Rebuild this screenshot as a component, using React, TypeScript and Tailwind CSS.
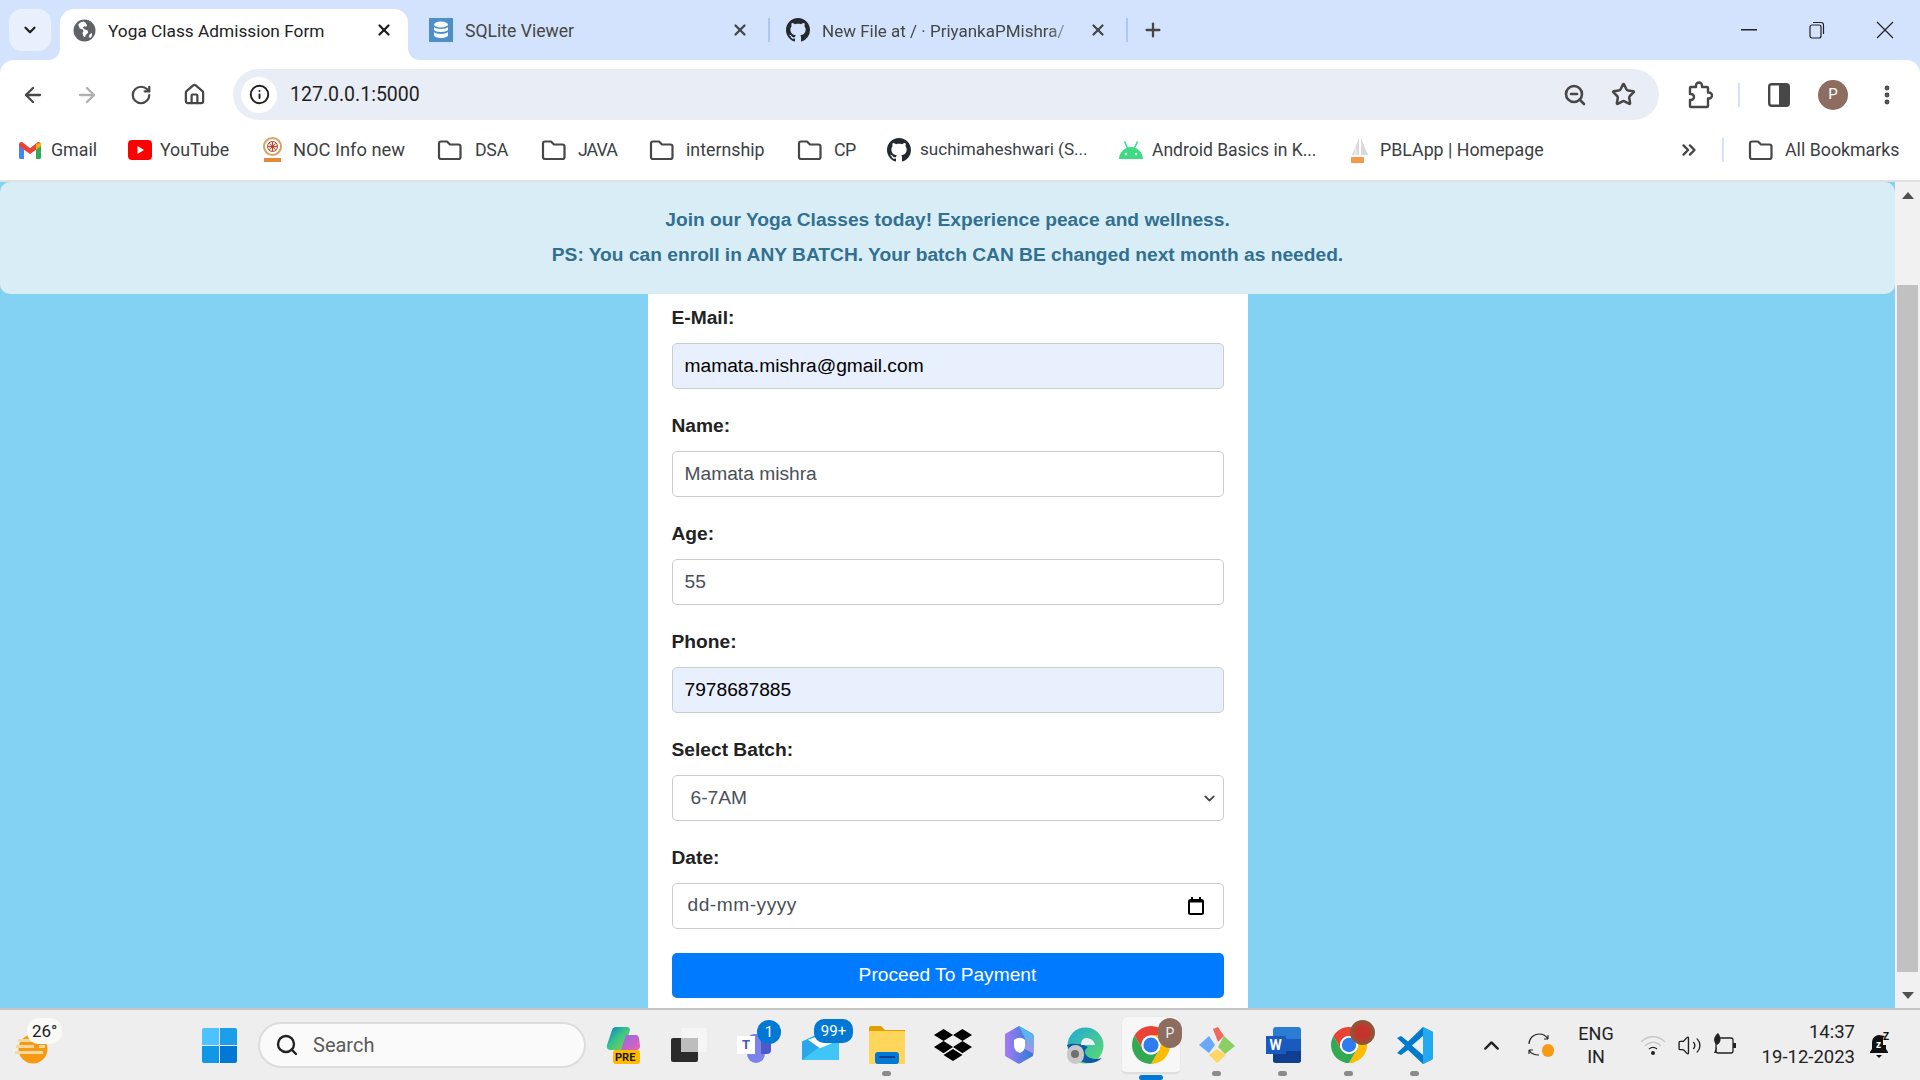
import React from "react";
import { BsGithub } from "react-icons/bs";
import { FaDropbox } from "react-icons/fa";
import { ArrowLeft, ArrowRight, RotateCw, Home, Info, ZoomOut, Star, MoreVertical, X, Plus, ChevronDown, ChevronUp, ChevronsRight, Search, Volume2 } from "lucide-react";

const ui = "font-['Roboto','Noto_Sans',sans-serif]";

function ChromeLogo({ size = 38 }: { size?: number }) {
  return (
    <svg width={size} height={size} viewBox="4 4 40 40">
      <path fill="#ea4335" d="M6.68 14A20 20 0 0 1 41.32 14H24A10 10 0 0 0 15.34 29Z" />
      <path fill="#fbbc04" d="M41.32 14A20 20 0 0 1 24 44L32.66 29A10 10 0 0 0 24 14Z" />
      <path fill="#34a853" d="M24 44A20 20 0 0 1 6.68 14L15.34 29A10 10 0 0 0 32.66 29Z" />
      <circle cx="24" cy="24" r="10" fill="#fff" />
      <circle cx="24" cy="24" r="8" fill="#2f7cf0" />
    </svg>
  );
}

function Globe() {
  return (
    <svg width="23" height="23" viewBox="0 0 22 22" className="shrink-0">
      <circle cx="11" cy="11" r="10.500" fill="#5f6368" />
      <path fill="#fff" d="M10 2.500c-2 .3-4 1.400-5 3l1.500 3.500 3 1 .5 2-1 1.500 1 3 1.500 1 .5-2 2.500-2.500-.5-2-3.500-1.500-1-1.500 1.500-1 1.500.5 1-1.500-1.500-2.500zM18 13.500l-2 1-1 3 2 .5c1-1.200 1.500-2.800 1-4.500z" />
    </svg>
  );
}

function Folder() {
  return (
    <svg width="25" height="22" viewBox="0 0 25 22" fill="none" className="shrink-0">
      <path d="M2 4.500c0-1 .7-2 2-2h6l3 3h8.500c1.200 0 2 .8 2 2v10.500c0 1.200-.8 2-2 2H4c-1.300 0-2-.8-2-2z" stroke="#474747" strokeWidth="2.200" strokeLinejoin="round" />
    </svg>
  );
}

function Gmail() {
  return (
    <svg width="22" height="17" viewBox="0 0 22 17" className="shrink-0">
      <path fill="#4285f4" d="M0 2v13.500C0 16.300.7 17 1.500 17H5V7.500L0 3z" />
      <path fill="#34a853" d="M22 2v13.500c0 .8-.7 1.500-1.500 1.500H17V7.500l5-4.500z" />
      <path fill="#ea4335" d="M0 2.500C0 .5 2.200-.6 3.800.6L11 6.200 18.200.6C19.800-.6 22 .5 22 2.500V4l-5 3.800L11 12 5 7.800 0 4z" />
      <path fill="#fbbc04" d="M17 1.800 22 .9V4l-5 3.800z" opacity="0.9" />
    </svg>
  );
}

function YouTube() {
  return (
    <svg width="24" height="20" viewBox="0 0 24 20" className="shrink-0">
      <rect width="24" height="20" y="0" rx="4" fill="#f00" />
      <path fill="#fff" d="M9.500 6l6.500 4-6.500 4z" />
    </svg>
  );
}

function Nptel() {
  return (
    <svg width="21" height="26" viewBox="0 0 21 26" className="shrink-0">
      <circle cx="10.500" cy="9.500" r="8.500" fill="none" stroke="#d9a066" strokeWidth="2" />
      <circle cx="10.500" cy="9.500" r="5" fill="#f6e6dc" stroke="#b5482c" strokeWidth="1" />
      <path stroke="#b5482c" strokeWidth="1" d="M10.500 5v9M6 9.500h9M7.500 6.500l6 6M13.500 6.500l-6 6" />
      <rect x="2" y="21" width="17" height="4" fill="#e08a3c" />
    </svg>
  );
}

function Android() {
  return (
    <svg width="24" height="20" viewBox="0 0 24 20" className="shrink-0">
      <path fill="#3ddc84" d="M0 19c0-6 5.300-12 12-12s12 6 12 12z" />
      <path stroke="#3ddc84" strokeWidth="1.600" d="M5.500 1.500 8.500 8M18.500 1.500 15.500 8" />
      <circle cx="7" cy="14" r="1.200" fill="#fff" />
      <circle cx="17" cy="14" r="1.200" fill="#fff" />
    </svg>
  );
}

function Pbl() {
  return (
    <svg width="20" height="27" viewBox="0 0 20 27" className="shrink-0">
      <path fill="#d9d9d9" d="M9 1 2 18h7zM11 1l7 17h-7z" />
      <path fill="#ececec" d="M6 6 4 18h3z" />
      <rect x="1" y="20" width="13" height="6" fill="#f59a4b" />
    </svg>
  );
}

function Bookmark({ icon, label, className = "", labelClass = "" }: { icon: React.ReactNode; label: string; className?: string; labelClass?: string }) {
  return (
    <div className={`flex shrink-0 items-center whitespace-nowrap text-[#3c4043] ${className}`}>
      {icon}
      <span className={labelClass}>{label}</span>
    </div>
  );
}

function Field({ label, first, children }: { label: string; first?: boolean; children: React.ReactNode }) {
  return (
    <div className={first ? "" : "mt-[26px]"}>
      <div className="mb-[14px] text-[19.200px] leading-[22px] font-bold text-[#222]">{label}</div>
      {children}
    </div>
  );
}

const inputBox = "block w-full h-[46px] rounded-[5px] border border-[#ccc] px-[12px] text-[19.200px] outline-none font-['Liberation_Sans',sans-serif]";

function TaskSlot({ children, dot, active }: { children: React.ReactNode; dot?: boolean; active?: boolean }) {
  return (
    <div className="relative flex h-[58px] w-[66px] shrink-0 items-center justify-center">
      {active && <div className="absolute left-[4px] top-[1px] h-[57px] w-[58px] rounded-[5px] border-b-2 border-[#dedede] bg-[#f7f7f7] shadow-[0_0_1px_#ccc]" />}
      <div className="relative flex items-center justify-center">{children}</div>
      {dot && <div className="absolute bottom-[-2px] left-[28px] h-[5px] w-[9px] rounded-full bg-[#8a8a8a]" />}
      {active && <div className="absolute bottom-[-6px] left-[21px] h-[5px] w-[24px] rounded-full bg-[#0078d4]" />}
    </div>
  );
}

export default function App() {
  return (
    <div className={`flex h-screen w-[1920px] flex-col overflow-hidden bg-[#d3e3fd] ${ui}`}>
      {/* tab strip */}
      <div className="flex h-[60px] shrink-0 items-center">
        <div className="ml-[9px] flex h-[42px] w-[42px] shrink-0 items-center justify-center rounded-[13px] bg-[#e8f0fe]">
          <ChevronDown size={18} strokeWidth={3} color="#1f1f1f" />
        </div>
        <div className="relative ml-[9px] flex h-[51px] w-[348px] shrink-0 items-center self-end rounded-t-[14px] bg-white pb-[9px] pl-[13px]">
          <svg className="absolute bottom-0 left-[-12px]" width="12" height="12" viewBox="0 0 12 12"><path fill="#fff" d="M12 0v12H0c7 0 12-5 12-12z" /></svg>
          <svg className="absolute bottom-0 right-[-12px]" width="12" height="12" viewBox="0 0 12 12"><path fill="#fff" d="M0 0v12h12C5 12 0 7 0 0z" /></svg>
          <Globe />
          <span className="ml-[12px] whitespace-nowrap pt-[3px] text-[17.300px] text-[#1f1f1f]">Yoga Class Admission Form</span>
          <X size={18} strokeWidth={3} color="#1f1f1f" className="ml-auto mr-[15px]" />
        </div>
        <div className="ml-[21px] flex w-[341px] shrink-0 items-center">
          <svg width="24" height="24" viewBox="0 0 24 24" className="shrink-0">
            <rect width="24" height="24" fill="#4e8fc9" />
            <ellipse cx="12" cy="6.500" rx="7" ry="3" fill="#fff" />
            <path fill="#fff" d="M5 9c1 2.500 13 2.500 14 0v3c-1 2.500-13 2.500-14 0zM5 14c1 2.500 13 2.500 14 0v3c0 1.600-3 3-7 3s-7-1.400-7-3z" />
          </svg>
          <span className="ml-[12px] pt-[3px] text-[17.600px] text-[#444746]">SQLite Viewer</span>
          <X size={18} strokeWidth={3} color="#444746" className="ml-auto mr-[19px]" />
          <div className="h-[24px] w-[2px] bg-[#a8c7fa]" />
        </div>
        <div className="ml-[16px] flex shrink-0 items-center">
          <BsGithub size={24} color="#24292f" className="shrink-0" />
          <span className="ml-[12px] w-[250px] shrink-0 whitespace-nowrap pt-[3px] text-[17px] text-[#444746] [mask-image:linear-gradient(to_right,black_90%,rgba(0,0,0,0.25))]">New File at / · PriyankaPMishra/</span>
          <X size={18} strokeWidth={3} color="#444746" className="ml-[17px] shrink-0" />
          <div className="ml-[19px] h-[24px] w-[2px] shrink-0 bg-[#a8c7fa]" />
          <Plus size={22} strokeWidth={2.500} color="#444746" className="ml-[14px] shrink-0" />
        </div>
        <svg width="16" height="2" className="ml-[577px] shrink-0"><rect width="16" height="1.500" fill="#222" /></svg>
        <svg width="16" height="18" viewBox="0 0 16 18" fill="none" stroke="#222" strokeWidth="1.200" className="ml-[52px] shrink-0">
          <rect x="1" y="4" width="11" height="13" rx="2" />
          <path d="M4 1.500h8c1.600 0 2.500.9 2.500 2.500v9" />
        </svg>
        <svg width="18" height="18" viewBox="0 0 18 18" stroke="#222" strokeWidth="1.200" className="ml-[51px] shrink-0"><path d="M1 1l16 16M17 1 1 17" /></svg>
      </div>

      {/* toolbar */}
      <div className="flex h-[60px] shrink-0 items-center rounded-t-[14px] bg-white pt-[9px]">
        <ArrowLeft size={24} strokeWidth={2.300} color="#474747" className="ml-[21px]" />
        <ArrowRight size={24} strokeWidth={2.300} color="#b0b0b0" className="ml-[30px]" />
        <RotateCw size={22} strokeWidth={2.400} color="#474747" className="ml-[31px]" />
        <Home size={23} strokeWidth={2.300} color="#474747" className="ml-[31px]" />
        <div className="ml-[27px] flex h-[51px] w-[1426px] items-center rounded-full bg-[#e9edf6] pl-[8px]">
          <div className="flex h-[36px] w-[36px] items-center justify-center rounded-full bg-white">
            <Info size={21} strokeWidth={2.200} color="#1f1f1f" />
          </div>
          <span className="ml-[13px] pt-[1px] text-[19.500px] text-[#1f1f1f]">127.0.0.1:5000</span>
          <ZoomOut size={24} strokeWidth={2.600} color="#474747" className="ml-auto" />
          <Star size={25} strokeWidth={2.400} color="#474747" className="ml-[24px] mr-[23px]" />
        </div>
        <svg width="26" height="28" viewBox="0 0 26 28" fill="none" className="ml-[28px]">
          <path stroke="#474747" strokeWidth="2.400" strokeLinejoin="round" d="M4 6h5V4.500a3 3 0 0 1 6 0V6h5c.6 0 1 .4 1 1v4.500h1a3 3 0 0 1 0 6h-1V25c0 .6-.4 1-1 1H4c-.6 0-1-.4-1-1v-6h1a3 3 0 0 0 0-6H3V7c0-.6.4-1 1-1z" />
        </svg>
        <div className="ml-[25px] h-[24px] w-[2px] bg-[#d3e3fd]" />
        <svg width="22" height="24" viewBox="0 0 22 24" className="ml-[28px]">
          <rect x="1.200" y="1.200" width="19.600" height="21.600" rx="2.500" fill="none" stroke="#474747" strokeWidth="2.400" />
          <path fill="#474747" d="M11 1h8a2 2 0 0 1 2 2v18a2 2 0 0 1-2 2h-8z" />
        </svg>
        <div className="ml-[28px] flex h-[30px] w-[30px] items-center justify-center rounded-full bg-[#8c6d60] text-[15px] text-white">P</div>
        <MoreVertical size={24} strokeWidth={2.800} color="#474747" className="ml-[27px]" />
      </div>

      {/* bookmarks */}
      <div className="flex h-[62px] shrink-0 items-center border-b-2 border-[#e0e0e0] bg-white pl-[19px] text-[17.800px]">
        <Bookmark icon={<Gmail />} label="Gmail" className="gap-[10px]" labelClass="w-[45px]" />
        <Bookmark icon={<YouTube />} label="YouTube" className="ml-[32px] gap-[8px]" labelClass="w-[69px]" />
        <Bookmark icon={<Nptel />} label="NOC Info new" className="ml-[33px] gap-[10px]" labelClass="w-[111px] text-[18.300px]" />
        <Bookmark icon={<Folder />} label="DSA" className="ml-[33px] gap-[13px]" labelClass="w-[33px] tracking-[-0.300px]" />
        <Bookmark icon={<Folder />} label="JAVA" className="ml-[33px] gap-[12px]" labelClass="w-[37px] tracking-[-1px]" />
        <Bookmark icon={<Folder />} label="internship" className="ml-[34px] gap-[12px]" labelClass="w-[78px]" />
        <Bookmark icon={<Folder />} label="CP" className="ml-[33px] gap-[12px]" labelClass="w-[21px] tracking-[-0.500px]" />
        <Bookmark icon={<BsGithub size={24} color="#24292f" />} label="suchimaheshwari (S..." className="ml-[32px] gap-[9px]" labelClass="w-[168px] text-[17.100px]" />
        <Bookmark icon={<Android />} label="Android Basics in K..." className="ml-[31px] gap-[9px]" labelClass="w-[164px] text-[17.500px]" />
        <Bookmark icon={<Pbl />} label="PBLApp | Homepage" className="ml-[34px] gap-[10px]" labelClass="w-[164px]" />
        <ChevronsRight size={22} strokeWidth={2.600} color="#474747" className="ml-auto" />
        <div className="ml-[22px] h-[24px] w-[2px] bg-[#d3e3fd]" />
        <Bookmark icon={<Folder />} label="All Bookmarks" className="ml-[24px] mr-[22px] gap-[12px]" labelClass="w-[113px]" />
      </div>

      {/* page + scrollbar */}
      <div className="flex min-h-0 flex-1">
        <div className="flex min-w-0 flex-1 flex-col bg-[#84d2f3] font-['Liberation_Sans',sans-serif]">
          <div className="flex h-[112px] shrink-0 flex-col items-center justify-center gap-[10.500px] rounded-[10px] bg-[#d9edf7] pb-[2px] text-[19.200px] leading-[25px] font-bold text-[#31708f]">
            <div>Join our Yoga Classes today! Experience peace and wellness.</div>
            <div>PS: You can enroll in ANY BATCH. Your batch CAN BE changed next month as needed.</div>
          </div>
          <div className="mx-auto min-h-0 w-[600px] flex-1 overflow-hidden bg-white px-[24px] pt-[13px]">
            <Field label="E-Mail:" first>
              <input readOnly value="mamata.mishra@gmail.com" className={`${inputBox} bg-[#e8f0fe] text-black`} />
            </Field>
            <Field label="Name:">
              <input readOnly value="Mamata mishra" className={`${inputBox} bg-white text-[#495057]`} />
            </Field>
            <Field label="Age:">
              <input readOnly value="55" className={`${inputBox} bg-white text-[#495057]`} />
            </Field>
            <Field label="Phone:">
              <input readOnly value="7978687885" className={`${inputBox} bg-[#e8f0fe] text-black`} />
            </Field>
            <Field label="Select Batch:">
              <div className="relative">
                <select defaultValue="6-7AM" className={`${inputBox} appearance-none bg-white pl-[18px] text-[#495057]`}>
                  <option>6-7AM</option>
                </select>
                <ChevronDown size={17} strokeWidth={2.600} color="#444" className="pointer-events-none absolute right-[6px] top-[15px]" />
              </div>
            </Field>
            <Field label="Date:">
              <div className={`${inputBox} flex items-center justify-between bg-white pl-[15px] pr-[19px] text-[#495057]`}>
                <span className="relative top-[-1px] tracking-[0.500px]">dd-mm-yyyy</span>
                <svg width="16" height="18" viewBox="0 0 16 18" fill="none">
                  <rect x="1" y="3" width="14" height="14" rx="1.500" stroke="#000" strokeWidth="2" />
                  <path fill="#000" d="M1 3h14v2.500H1zM3 0h2v3H3zM11 0h2v3h-2z" />
                </svg>
              </div>
            </Field>
            <button className="mt-[24px] h-[45px] w-full rounded-[5px] bg-[#007bff] text-[19.200px] text-white">Proceed To Payment</button>
          </div>
        </div>
        <div className="flex w-[25px] shrink-0 flex-col items-center bg-[#f1f1f1] pt-[10px]">
          <svg width="12" height="7" viewBox="0 0 12 7" className="shrink-0"><path fill="#505050" d="M6 0l6 7H0z" /></svg>
          <div className="mt-[86px] h-[687px] w-[21px] shrink-0 bg-[#c1c1c1]" />
          <svg width="12" height="7" viewBox="0 0 12 7" className="mt-[20px] shrink-0"><path fill="#505050" d="M6 7 0 0h12z" /></svg>
        </div>
      </div>

      {/* taskbar */}
      <div className="flex h-[72px] shrink-0 items-center border-t-2 border-[#c4c4c4] bg-[#eeeeee]">
        <div className="relative ml-[15px] h-[36px] w-[36px] shrink-0">
          <svg width="34" height="30" viewBox="0 0 34 30" className="absolute left-0 top-[7px]">
            <circle cx="18" cy="15" r="14.500" fill="#f59a12" />
            <path fill="#f3d9a0" d="M3 5h26v3H3zM1 11h18v3H1zM24 11h6v3h-6zM0 17h28v3H0z" />
          </svg>
          <div className="absolute left-[12px] top-[-9px] rounded-[12px] bg-[#f9f9f6] px-[5px] text-[17px] leading-[26px] text-[#1a1a1a]">26°</div>
        </div>
        <div className="ml-[151px] grid h-[35px] w-[35px] shrink-0 grid-cols-2 gap-[1px]">
          <div className="rounded-tl-[2px] bg-[#4cc2ff]" />
          <div className="rounded-tr-[2px] bg-[#1a9fe8]" />
          <div className="rounded-bl-[2px] bg-[#1098e6]" />
          <div className="rounded-br-[2px] bg-[#0078d4]" />
        </div>
        <div className="ml-[21px] flex h-[46px] w-[328px] shrink-0 items-center rounded-full border-2 border-[#dcdcdc] bg-[#fafafa] pl-[15px]">
          <Search size={24} strokeWidth={2.400} color="#222" />
          <span className="ml-[14px] text-[20px] text-[#5a5a5a]">Search</span>
        </div>
        <div className="ml-[4px] flex shrink-0 items-center">
          <TaskSlot>
            <svg width="34" height="38" viewBox="0 0 34 38">
              <defs>
                <linearGradient id="cp" x1="0" y1="0" x2="1" y2="1"><stop offset="0" stopColor="#0f6fd6" /><stop offset=".45" stopColor="#35c48a" /><stop offset="1" stopColor="#9fcf45" /></linearGradient>
                <linearGradient id="cp2" x1="0" y1="0" x2="1" y2="1"><stop offset="0" stopColor="#8a6be8" /><stop offset="1" stopColor="#f05fb0" /></linearGradient>
              </defs>
              <path fill="url(#cp)" d="M10 1h11c2 0 3 1 3 3l-6 20H5c-3 0-5-2-4-5L6 4c.6-2 2-3 4-3z" />
              <path fill="url(#cp2)" d="M20 9h10c1.500 0 2.500 1 3 3l1 8c0 2-1 4-4 4H15z" />
              <rect x="7" y="24" width="27" height="14" rx="3" fill="#ffb900" />
              <text x="9" y="35" fontSize="11" fontWeight="700" fill="#1a1a1a" fontFamily="Roboto">PRE</text>
            </svg>
          </TaskSlot>
          <TaskSlot>
            <svg width="36" height="34" viewBox="0 0 36 34">
              <rect x="0" y="10" width="27" height="24" rx="2" fill="#2b2b2b" />
              <rect x="10" y="0" width="26" height="24" rx="2" fill="#f5f5f5" />
              <rect x="10" y="10" width="17" height="14" fill="#bdbdbd" />
            </svg>
          </TaskSlot>
          <TaskSlot>
            <div className="relative h-[36px] w-[36px]">
              <div className="absolute left-[10px] top-[7px] h-[29px] w-[18px] rounded-b-[10px] rounded-t-[8px] bg-[#7b83eb]" />
              <div className="absolute left-[24px] top-[9px] h-[18px] w-[10px] rounded-r-[4px] bg-[#5059c9]" />
              <div className="absolute left-0 top-[9px] flex h-[18px] w-[18px] items-center justify-center bg-white text-[13px] font-bold text-[#4b53bc]">T</div>
              <div className="absolute left-[20px] top-[-7px] flex h-[24px] w-[24px] items-center justify-center rounded-full bg-[#0078d4] text-[15px] text-white">1</div>
            </div>
          </TaskSlot>
          <TaskSlot>
            <div className="relative h-[36px] w-[38px]">
              <svg width="37" height="27" viewBox="0 0 37 32" preserveAspectRatio="none" className="absolute top-[6px]">
                <path fill="#28a8ea" d="M0 10 18 0l19 10v22H0z" />
                <path fill="#50d9ff" d="M0 32 18 16l19-6v22z" opacity=".6" />
                <path fill="#fff" d="M6 8l14-6 10 10-12 6z" />
              </svg>
              <div className="absolute left-[12px] top-[-8px] flex h-[24px] w-[39px] items-center justify-center rounded-[10px] bg-[#0078d4] text-[15px] text-white">99+</div>
            </div>
          </TaskSlot>
          <TaskSlot dot>
            <svg width="36" height="38" viewBox="0 0 36 38">
              <path fill="#e0a100" d="M0 2c0-1 .6-2 2-2h10l4 4h20v6H0z" />
              <rect x="0" y="5" width="36" height="33" rx="1" fill="#ffd65c" />
              <rect x="6" y="26" width="24" height="12" rx="3" fill="#0078d4" />
              <rect x="10" y="30" width="16" height="2" fill="#003e92" />
            </svg>
          </TaskSlot>
          <TaskSlot>
            <FaDropbox size={38} color="#000" />
          </TaskSlot>
          <TaskSlot>
            <svg width="32" height="38" viewBox="0 0 32 38">
              <defs>
                <linearGradient id="m1" x1="0" y1="0" x2="1" y2="0"><stop offset="0" stopColor="#a67af4" /><stop offset="1" stopColor="#2a7dd6" /></linearGradient>
                <linearGradient id="m2" x1="0" y1="0" x2="0" y2="1"><stop offset="0" stopColor="#34c6f4" /><stop offset="1" stopColor="#b58de8" /></linearGradient>
              </defs>
              <path fill="url(#m1)" d="M16 0 30 8v22L16 38 2 30V8z" />
              <path fill="url(#m2)" d="M16 0 31 9v19l-9-5V12z" />
              <path fill="#fff" d="M11 14c3-3 8-3 11 0v6c0 4-3 6-5 7-3-1-6-3-6-7z" />
            </svg>
          </TaskSlot>
          <TaskSlot>
            <div className="relative h-[37px] w-[37px]">
              <svg width="37" height="37" viewBox="0 0 37 37">
                <defs><linearGradient id="ed" x1="0" y1="0" x2="1" y2="1"><stop offset="0" stopColor="#1fa8d8" /><stop offset="1" stopColor="#5fdc6b" /></linearGradient></defs>
                <circle cx="18.500" cy="18.500" r="18" fill="url(#ed)" />
                <path fill="#0c59a4" d="M0 18c4 10 12 19 24 18 4-.5 8-2 11-5-6 2-13 1-16-3-2-3-1-6 2-8-8-4-17-4-21-2z" />
                <path fill="#eee" d="M14 18h14c-1-5-5-7-9-7-3 0-5 3-5 7z" />
              </svg>
              <div className="absolute bottom-0 left-0 flex h-[19px] w-[17px] items-center justify-center rounded-full bg-[#c8c8c8]">
                <div className="h-[8px] w-[8px] rounded-full bg-[#6f6f6f]" />
              </div>
            </div>
          </TaskSlot>
          <TaskSlot active>
            <div className="relative">
              <ChromeLogo />
              <div className="absolute right-[-12px] top-[-8px] flex h-[30px] w-[24px] items-center justify-center rounded-full bg-[#8c6d60] text-[14px] text-[#eee]">P</div>
            </div>
          </TaskSlot>
          <TaskSlot dot>
            <svg width="36" height="36" viewBox="0 0 36 36">
              <path fill="#ee6a5f" d="M14 2l5-2 6 9-6 6z" />
              <path fill="#68a8f8" d="M0 18 10 9l6 9-6 8z" />
              <path fill="#8bcf62" d="M25 9l11 10-10 8-7-7z" />
              <path fill="#fdd663" d="M18 22l9 6-9 8-8-8z" />
            </svg>
          </TaskSlot>
          <TaskSlot dot>
            <div className="relative h-[36px] w-[35px]">
              <div className="absolute left-[7px] top-0 h-[36px] w-[28px] overflow-hidden rounded-[3px] bg-[#2b7cd3]">
                <div className="mt-[12px] h-[12px] bg-[#185abd]" />
                <div className="h-[12px] bg-[#103f91]" />
              </div>
              <div className="absolute left-0 top-[9px] flex h-[18px] w-[20px] items-center justify-center bg-[#185abd] text-[14px] font-bold text-white">W</div>
            </div>
          </TaskSlot>
          <TaskSlot dot>
            <div className="relative">
              <ChromeLogo size={36} />
              <div className="absolute right-[-8px] top-[-7px] h-[25px] w-[25px] rounded-full bg-[radial-gradient(circle,#c4342c_35%,#6f6a3f_80%)]" />
            </div>
          </TaskSlot>
          <TaskSlot dot>
            <svg width="36" height="37" viewBox="0 0 36 37">
              <path fill="#007acc" d="M26 0 36 5v27l-10 5-15-14-7 5-4-2 8-7.500L0 11l4-2 7 5.500z" />
              <path fill="#23a9f1" d="M26 0 36 5v27l-10 5zM26 9 15 18.500 26 28z" />
              <path fill="#eeeeee" d="M26 9 15 18.500 26 28z" />
            </svg>
          </TaskSlot>
        </div>
        <ChevronUp size={25} strokeWidth={2.200} color="#222" className="ml-[31px] shrink-0" />
        <div className="relative ml-[24px] h-[26px] w-[26px] shrink-0">
          <svg width="26" height="26" viewBox="0 0 26 26" fill="none" stroke="#222" strokeWidth="1.100">
            <path d="M1 12C1 6 6 2 11 2c4 0 7 1.500 9 5M20 7V3M20 7h-4M1 18h4M1 18v4M1 18c2 4 6 5 10 5" />
          </svg>
          <div className="absolute bottom-[1px] right-0 h-[13px] w-[12px] rounded-full bg-[#f59a12]" />
        </div>
        <div className="ml-[24px] w-[36px] shrink-0 text-center text-[18px] leading-[23px] text-[#222]">ENG<br />IN</div>
        <svg width="26" height="20" viewBox="0 0 26 20" fill="none" className="ml-[26px] shrink-0">
          <path stroke="#c8c8c8" strokeWidth="1.300" d="M1 7c7-7 17-7 24 0M5 11c5-5 11-5 16 0" />
          <path stroke="#222" strokeWidth="1.300" d="M9 14c2.500-2 5.500-2 8 0" />
          <circle cx="13" cy="18" r="2" fill="#222" />
        </svg>
        <Volume2 size={25} strokeWidth={1.300} color="#222" className="ml-[11px] shrink-0" />
        <svg width="25" height="24" viewBox="0 0 25 24" fill="none" className="ml-[10px] shrink-0">
          <rect x="4" y="5" width="17" height="15" rx="2" stroke="#222" strokeWidth="1.300" />
          <rect x="21" y="10" width="3" height="5" fill="#222" />
          <path fill="#222" d="M6 0C1 4 1 9 5 12c4-2 5-7 1-12zM5 13l-3 7h2z" />
        </svg>
        <div className="ml-[6px] w-[112px] shrink-0 text-right text-[18.500px] leading-[25px] text-[#222]">14:37<br />19-12-2023</div>
        <svg width="22" height="28" viewBox="0 0 22 28" className="ml-[15px] shrink-0">
          <path fill="#111" d="M9 4c-5 .5-7 4-7 8v6l-2 3v1h18v-1l-2-3v-4h-3V7l2-2z" />
          <path fill="#111" d="M6 24h6l-3 3z" />
          <text x="6" y="17" fontSize="10" fontWeight="700" fill="#fff" fontFamily="Roboto">z</text>
          <text x="13" y="9" fontSize="10" fontWeight="700" fill="#111" fontFamily="Roboto">Z</text>
        </svg>
      </div>
    </div>
  );
}
